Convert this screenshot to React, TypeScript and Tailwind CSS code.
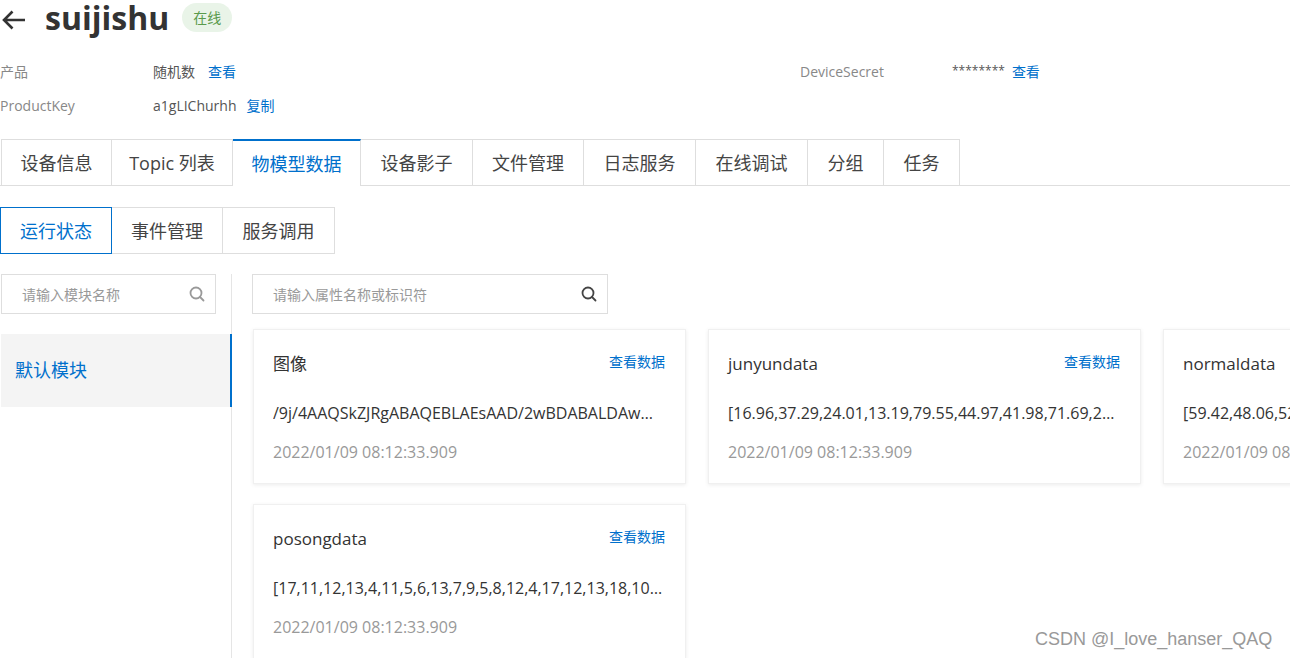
import React from "react";

const FONT = { fontFamily: '"Open Sans", "Noto Sans CJK SC", sans-serif' };

const tabs = [
  { t: "设备信息", w: "w-[111px]" },
  { t: "Topic 列表", w: "w-[121px]" },
  { t: "物模型数据", w: "w-[128px]" },
  { t: "设备影子", w: "w-[112px]" },
  { t: "文件管理", w: "w-[111px]" },
  { t: "日志服务", w: "w-[112px]" },
  { t: "在线调试", w: "w-[112px]" },
  { t: "分组", w: "w-[76px]" },
  { t: "任务", w: "w-[76px]" },
];
const subTabs = [
  { t: "运行状态", w: "w-[112px]" },
  { t: "事件管理", w: "w-[111px]" },
  { t: "服务调用", w: "w-[112px]" },
];

const cards = [
  { title: "图像", value: "/9j/4AAQSkZJRgABAQEBLAEsAAD/2wBDABALDAwMDAwMDAwMDAwMDAwMDAwMDAwMDAwM" },
  { title: "junyundata", value: "[16.96,37.29,24.01,13.19,79.55,44.97,41.98,71.69,23.44,55.12]" },
  { title: "normaldata", value: "[59.42,48.06,52.11,50.37,49.81]" },
  { title: "posongdata", value: "[17,11,12,13,4,11,5,6,13,7,9,5,8,12,4,17,12,13,18,10,9,8]" },
];

function SearchIcon({ color = "#555" }: { color?: string }) {
  return (
    <svg width="16" height="16" viewBox="0 0 16 16" fill="none">
      <circle cx="7" cy="7" r="5.5" stroke={color} strokeWidth="1.8" />
      <path d="M11 11L14.5 14.5" stroke={color} strokeWidth="1.8" strokeLinecap="round" />
    </svg>
  );
}

export default function App() {
  return (
    <div className="relative w-[1290px] h-[658px] overflow-hidden bg-white text-[#333]" style={FONT}>
      {/* Header */}
      <div className="flex items-center h-[38px] pt-[2px]">
        <svg width="26" height="22" viewBox="0 0 26 22" className="ml-[1px]">
          <path d="M24 11H3M11.5 2.5L3 11L11.5 19.5" stroke="#333" strokeWidth="2.6" fill="none" />
        </svg>
        <span className="ml-[18px] text-[32px] font-bold leading-[38px] text-[#333] -mt-[4px]">suijishu</span>
        <span className="ml-[13px] -mt-[6px] h-[29px] px-[11px] rounded-full bg-[#e9f4e8] text-[#5a9a4c] text-[14px] flex items-center">在线</span>
      </div>

      {/* Info rows */}
      <div className="mt-[16px] text-[14px]">
        <div className="flex items-center h-[34px]">
          <span className="w-[153px] text-[#888]">产品</span>
          <span className="text-[#555]">随机数</span>
          <span className="ml-[13px] text-[#0070cc]">查看</span>
          <span className="ml-[564px] w-[152px] text-[#888]">DeviceSecret</span>
          <span className="text-[#555] text-[12px]">********</span>
          <span className="ml-[7px] text-[#0070cc]">查看</span>
        </div>
        <div className="flex items-center h-[34px]">
          <span className="w-[153px] text-[#888]">ProductKey</span>
          <span className="text-[#555]">a1gLIChurhh</span>
          <span className="ml-[10px] text-[#0070cc]">复制</span>
        </div>
      </div>

      {/* Tabs */}
      <div className="mt-[17px] flex border-b border-[#dedede] pl-[1px]">
        {tabs.map((tab, i) => {
          const active = i === 2;
          return (
            <div
              key={tab.t}
              className={
                tab.w +
                " h-[47px] flex items-center justify-center text-[18px] -mb-[1px] pt-[1px] " +
                (active
                  ? "border-t-2 border-t-[#0070cc] border-r border-r-[#dedede] bg-white text-[#0070cc]"
                  : "border-t border-b border-r border-[#dedede] text-[#444]") +
                (i === 0 ? " border-l" : "")
              }
            >
              {tab.t}
            </div>
          );
        })}
      </div>

      {/* Sub tabs */}
      <div className="mt-[21px] flex">
        {subTabs.map((s, i) => (
          <div
            key={s.t}
            className={
              s.w +
              " h-[47px] flex items-center justify-center text-[18px] pt-[1px] " +
              (i === 0
                ? "border border-[#0070cc] text-[#0070cc]"
                : "border-t border-b border-r border-[#dedede] text-[#444]")
            }
          >
            {s.t}
          </div>
        ))}
      </div>

      {/* Body */}
      <div className="mt-[20px] flex">
        {/* Sidebar */}
        <div className="w-[232px] shrink-0 border-r border-[#e5e5e5] h-[400px]">
          <div className="ml-[1px] w-[215px] h-[40px] border border-[#dedede] flex items-center justify-between pl-[20px] pr-[10px]">
            <span className="text-[14px] text-[#999]">请输入模块名称</span>
            <SearchIcon color="#999" />
          </div>
          <div className="mt-[20px] ml-[1px] -mr-[1px] h-[73px] bg-[#f4f4f4] border-r-2 border-[#0070cc] flex items-center pl-[14px] text-[18px] text-[#0070cc]">
            默认模块
          </div>
        </div>

        {/* Main */}
        <div className="pl-[20px]">
          <div className="w-[356px] h-[40px] border border-[#dedede] flex items-center justify-between pl-[20px] pr-[10px]">
            <span className="text-[14px] text-[#999]">请输入属性名称或标识符</span>
            <SearchIcon color="#444" />
          </div>
          <div className="mt-[15px] ml-[1px] grid grid-cols-[433px_433px_433px] gap-x-[22px] gap-y-[20px]">
            {cards.map((c) => (
              <div
                key={c.title}
                className="h-[155px] bg-white border border-[#f0f0f0] shadow-[0_1px_4px_rgba(0,0,0,0.08)] pl-[19px] pr-[20px] pt-[21px]"
              >
                <div className="flex items-center justify-between">
                  <span className="text-[17px] text-[#333]">{c.title}</span>
                  <span className="text-[14px] text-[#0070cc] -mt-[4px]">查看数据</span>
                </div>
                <div className="mt-[24px] text-[16px] text-[#333] truncate">{c.value}</div>
                <div className="mt-[15px] text-[16px] text-[#999]">2022/01/09 08:12:33.909</div>
              </div>
            ))}
          </div>
        </div>
      </div>

      {/* Watermark */}
      <div
        className="absolute left-[1035px] top-[626px] text-[18px] text-[#999]"
        style={{ fontFamily: '"Liberation Sans", Arial, sans-serif' }}
      >
        CSDN @I_love_hanser_QAQ
      </div>
    </div>
  );
}
